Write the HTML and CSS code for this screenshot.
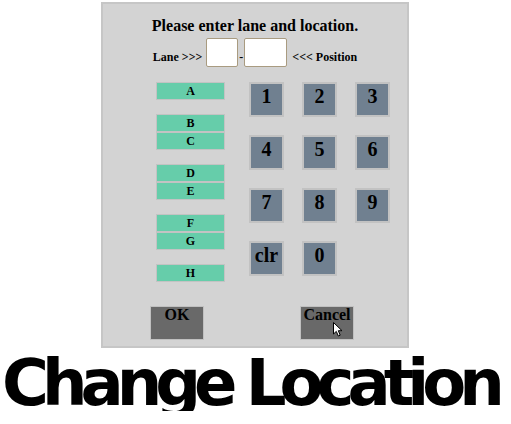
FILE: index.html
```html
<!DOCTYPE html>
<html>
<head>
<meta charset="utf-8">
<link rel="stylesheet" href="styles.css">
</head>
<body>
<div class="panel">
  <div class="title">Please enter lane and location.</div>
  <div class="entry">
    <span class="lbl lbl-lane">Lane &gt;&gt;&gt;</span>
    <input class="box box-lane" type="text">
    <span class="lbl dash">-</span>
    <input class="box box-pos" type="text">
    <span class="lbl lbl-pos">&lt;&lt;&lt; Position</span>
  </div>
  <div class="main">
    <div class="letters">
      <div class="lgroup"><div class="lbtn">A</div></div>
      <div class="lgroup"><div class="lbtn">B</div><div class="lbtn">C</div></div>
      <div class="lgroup"><div class="lbtn">D</div><div class="lbtn">E</div></div>
      <div class="lgroup"><div class="lbtn">F</div><div class="lbtn">G</div></div>
      <div class="lgroup"><div class="lbtn">H</div></div>
    </div>
    <div class="numpad">
      <div class="nbtn">1</div>
      <div class="nbtn">2</div>
      <div class="nbtn">3</div>
      <div class="nbtn">4</div>
      <div class="nbtn">5</div>
      <div class="nbtn">6</div>
      <div class="nbtn">7</div>
      <div class="nbtn">8</div>
      <div class="nbtn">9</div>
      <div class="nbtn">clr</div>
      <div class="nbtn">0</div>
    </div>
  </div>
  <div class="actions">
    <div class="abtn">OK</div>
    <div class="abtn cancel">Cancel<svg class="cursor" width="11" height="15" viewBox="0 0 11 15"><path d="M0.5 0.5 L0.5 12 L3.3 9.4 L5.3 14 L7.2 13.2 L5.3 8.7 L9 8.7 Z" fill="#fff" stroke="#000" stroke-width="1" stroke-linejoin="miter"/></svg></div>
  </div>
</div>
<h1 class="caption">Change Location</h1>
</body>
</html>
```

FILE: styles.css
```css
body {
  margin: 0;
  background: #fff;
  font-family: "Liberation Serif", "Times New Roman", serif;
  color: #000;
}

.panel {
  width: 308px;
  height: 346px;
  margin: 2px 0 0 101px;
  box-sizing: border-box;
  border: 2px solid #c6c6c6;
  background: #d3d3d3;
  padding-top: 12px;
}

.title {
  font-weight: 700;
  font-size: 16px;
  line-height: 20px;
  text-align: center;
}

.entry {
  display: flex;
  justify-content: center;
  align-items: flex-end;
  margin-top: 2px;
  height: 29px;
}

.lbl {
  font-weight: 700;
  font-size: 12px;
  line-height: 14px;
  margin-bottom: 3px;
  white-space: nowrap;
}

.lbl-lane { margin-right: 4px; }
.dash { margin: 0 1px 3px; }
.lbl-pos { margin-left: 5px; }

.box {
  display: block;
  height: 29px;
  box-sizing: border-box;
  border: 1px solid #a99b80;
  border-radius: 2px;
  background: #fff;
  padding: 0;
  margin: 0;
}
.box-lane { width: 32px; }
.box-pos { width: 43px; }

.main {
  display: flex;
  align-items: flex-start;
  margin-top: 15px;
  padding-left: 53px;
}

.letters {
  width: 69px;
  display: flex;
  flex-direction: column;
  gap: 14px;
}

.lbtn {
  height: 18px;
  box-sizing: border-box;
  border: 1px solid #c3c3c3;
  background: #66cdaa;
  font-weight: 700;
  font-size: 12px;
  line-height: 16px;
  text-align: center;
}

.numpad {
  margin-left: 24px;
  display: grid;
  grid-template-columns: repeat(3, 35px);
  grid-auto-rows: 35px;
  gap: 18px;
}

.nbtn {
  box-sizing: border-box;
  border: 2px solid #c2c2c2;
  background: #708090;
  font-weight: 700;
  font-size: 20px;
  line-height: 25px;
  text-align: center;
}

.actions {
  display: flex;
  gap: 96px;
  margin-top: 24px;
  padding-left: 47px;
}

.abtn {
  position: relative;
  width: 54px;
  height: 34px;
  box-sizing: border-box;
  border: 1px solid #c0c0c0;
  background: #696969;
  font-weight: 700;
  font-size: 16px;
  line-height: 16px;
  text-align: center;
}

.cursor {
  position: absolute;
  left: 32px;
  top: 15px;
}

.caption {
  margin: 7px 0 0 2px;
  font-family: "DejaVu Sans", sans-serif;
  font-weight: 700;
  font-size: 64px;
  line-height: 56px;
  letter-spacing: -7px;
  white-space: nowrap;
  color: #000;
}
```
